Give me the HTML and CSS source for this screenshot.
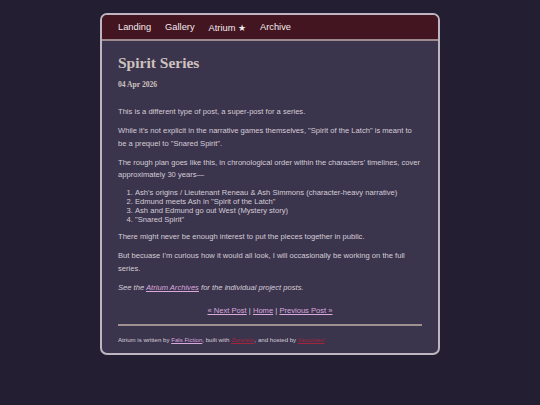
FILE: index.html
```html
<!DOCTYPE html>
<html>
<head>
<meta charset="utf-8">
<link rel="stylesheet" href="styles.css">
</head>
<body>
<div class="frame">
  <nav class="nav">
    <a href="#">Landing</a>
    <a href="#">Gallery</a>
    <a href="#">Atrium ★</a>
    <a href="#">Archive</a>
  </nav>
  <main class="content">
    <h1 class="title">Spirit Series</h1>
    <h4 class="date">04 Apr 2026</h4>
    <p>This is a different type of post, a super-post for a series.</p>
    <p>While it's not explicit in the narrative games themselves, "Spirit of the Latch" is meant to be a prequel to "Snared Spirit".</p>
    <p>The rough plan goes like this, in chronological order within the characters' timelines, cover approximately 30 years—</p>
    <ol class="list">
      <li>Ash's origins / Lieutenant Reneau &amp; Ash Simmons (character-heavy narrative)</li>
      <li>Edmund meets Ash in "Spirit of the Latch"</li>
      <li>Ash and Edmund go out West (Mystery story)</li>
      <li>"Snared Spirit"</li>
    </ol>
    <p>There might never be enough interest to put the pieces together in public.</p>
    <p>But becuase I'm curious how it would all look, I will occasionally be working on the full series.</p>
    <p class="note"><em>See the <a href="#">Atrium Archives</a> for the individual project posts.</em></p>
    <div class="pager"><a href="#">« Next Post</a> | <a href="#">Home</a> | <a href="#">Previous Post »</a></div>
    <hr class="rule">
    <footer class="footer">Atrium is written by <a href="#">Fals Fiction</a>, built with <a class="red" href="#">Zonelets</a>, and hosted by <a class="red" href="#">Neocities!</a></footer>
  </main>
</div>
</body>
</html>
```
FILE: styles.css
```css
html, body {
  margin: 0;
  padding: 0;
}
body {
  background: #231e32;
  font-family: "Liberation Sans", Arial, sans-serif;
  color: #d4cdd6;
  padding-top: 13px;
}
.frame {
  width: 336px;
  margin: 0 auto;
  border: 2px solid #bdb6c0;
  border-radius: 7px;
  background: #3b344d;
  overflow: hidden;
}
.nav {
  background: #431520;
  border-bottom: 2px solid #9c8a90;
  height: 24px;
  display: flex;
  align-items: center;
  gap: 14px;
  padding-left: 16px;
}
.nav a {
  color: #f2eaee;
  text-decoration: none;
  font-size: 9.3px;
}
.content {
  padding: 10px 16px 8px 16px;
}
.title {
  font-family: "Liberation Serif", "Times New Roman", serif;
  font-weight: bold;
  font-size: 15.5px;
  color: #cdc2bd;
  margin: 3px 0 0 0;
  line-height: 18px;
}
.date {
  font-family: "Liberation Serif", "Times New Roman", serif;
  font-weight: bold;
  font-size: 7.6px;
  color: #cdc2bd;
  margin: 8px 0 0 0;
}
p {
  font-size: 7.6px;
  line-height: 12.5px;
  margin: 6.5px 0;
}
.date + p {
  margin-top: 17px;
}
.list {
  font-size: 7.6px;
  line-height: 9px;
  margin: 6px 0 7px 0;
  padding-left: 17px;
}
a {
  color: #d9a8dc;
}
.pager {
  text-align: center;
  font-size: 7.6px;
  margin-top: 12px;
}
.rule {
  border: none;
  height: 2px;
  background: #9e9090;
  margin: 9px 0 0 0;
}
.footer {
  font-size: 6.1px;
  margin-top: 10px;
  margin-bottom: 2px;
}
.footer a.red {
  color: #a3243b;
}
```
